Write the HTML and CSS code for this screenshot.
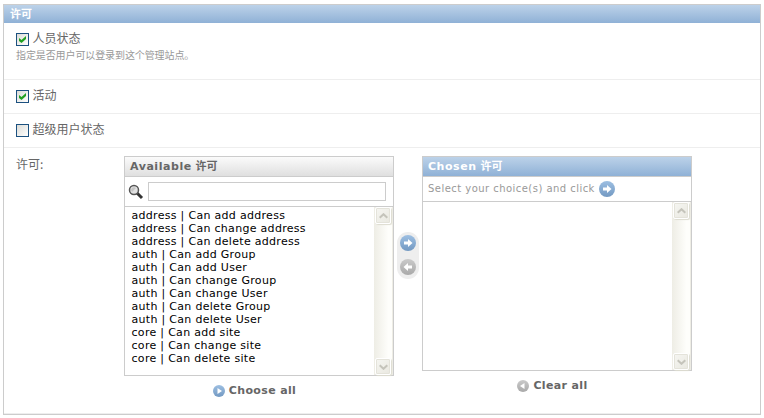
FILE: index.html
```html
<!DOCTYPE html>
<html lang="zh-CN">
<head>
<meta charset="utf-8">
<title>许可</title>
<link rel="stylesheet" href="styles.css">
</head>
<body>
<svg class="defs" width="0" height="0">
  <defs>
    <linearGradient id="blue" x1="0" y1="0" x2="0" y2="1"><stop offset="0" stop-color="#9dbfe2"/><stop offset="1" stop-color="#7399c2"/></linearGradient>
    <linearGradient id="grey" x1="0" y1="0" x2="0" y2="1"><stop offset="0" stop-color="#cacaca"/><stop offset="1" stop-color="#a9a9a9"/></linearGradient>
    <symbol id="arrow" viewBox="0 0 16 16"><path d="M4 6.500h4V4l4.500 4L8 12V9.500H4z" fill="#fff"/></symbol>
    <symbol id="chevron" viewBox="0 0 9 6"><path d="M.7 4.800 4.500 1.200 8.300 4.800" fill="none" stroke="#c5c4bb" stroke-width="2"/></symbol>
  </defs>
</svg>
<fieldset class="module">
  <h2>许可</h2>
  <div class="row row-staff">
    <label class="check"><span class="box"><svg width="7" height="7" viewBox="0 0 7 7"><path d="M0 2v3l2.500 2L7 3V0L2.500 4z" fill="#21a121"/></svg></span>人员状态</label>
    <p class="help">指定是否用户可以登录到这个管理站点。</p>
  </div>
  <div class="row"><label class="check"><span class="box"><svg width="7" height="7" viewBox="0 0 7 7"><path d="M0 2v3l2.500 2L7 3V0L2.500 4z" fill="#21a121"/></svg></span>活动</label></div>
  <div class="row"><label class="check"><span class="box"></span>超级用户状态</label></div>
  <div class="row row-perms">
    <div class="field-label">许可:</div>
    <div class="selector">
      <section class="available">
        <div class="panel">
          <h3><span>Available</span> 许可</h3>
          <div class="search">
            <svg width="16" height="16" viewBox="0 0 16 16"><path d="m9 9 5 5" stroke="#333" stroke-width="3"/><circle cx="6" cy="6" r="4.500" fill="#e2e2e2" stroke="#555" stroke-width="1.500"/><path d="M3 6a3 3 0 0 1 5-2L4 8z" fill="#c4c4c4"/></svg>
            <input type="text">
          </div>
          <div class="list">
            <ul>
              <li>address | Can add address</li>
              <li>address | Can change address</li>
              <li>address | Can delete address</li>
              <li>auth | Can add Group</li>
              <li>auth | Can add User</li>
              <li>auth | Can change Group</li>
              <li>auth | Can change User</li>
              <li>auth | Can delete Group</li>
              <li>auth | Can delete User</li>
              <li>core | Can add site</li>
              <li>core | Can change site</li>
              <li>core | Can delete site</li>
            </ul>
            <div class="scroll"><span class="btn"><svg width="9" height="6"><use href="#chevron"/></svg></span><span class="btn down"><svg width="9" height="6"><use href="#chevron"/></svg></span></div>
          </div>
        </div>
        <a class="all"><svg width="12" height="12" viewBox="0 0 12 12"><circle cx="6" cy="6" r="6" fill="url(#blue)"/><path d="M4.500 3 9 6 4.500 9z" fill="#fff"/></svg><span>Choose all</span></a>
      </section>
      <div class="chooser">
        <svg width="16" height="16" viewBox="0 0 16 16"><circle cx="8" cy="8" r="8" fill="url(#blue)"/><use href="#arrow"/></svg>
        <svg width="16" height="16" viewBox="0 0 16 16"><circle cx="8" cy="8" r="8" fill="url(#grey)"/><use href="#arrow" transform="matrix(-1 0 0 1 16 0)"/></svg>
      </div>
      <section class="chosen">
        <div class="panel">
          <h3><span>Chosen</span> 许可</h3>
          <p class="hint"><span>Select your choice(s) and click</span><svg width="16" height="16" viewBox="0 0 16 16"><circle cx="8" cy="8" r="8" fill="url(#blue)"/><use href="#arrow"/></svg></p>
          <div class="list">
            <ul></ul>
            <div class="scroll"><span class="btn"><svg width="9" height="6"><use href="#chevron"/></svg></span><span class="btn down"><svg width="9" height="6"><use href="#chevron"/></svg></span></div>
          </div>
        </div>
        <a class="all"><svg width="12" height="12" viewBox="0 0 12 12"><circle cx="6" cy="6" r="6" fill="url(#grey)"/><path d="M7.500 3 3 6l4.500 3z" fill="#fff"/></svg><span>Clear all</span></a>
      </section>
    </div>
  </div>
</fieldset>
</body>
</html>
```

FILE: styles.css
```css
* { box-sizing: border-box; margin: 0; padding: 0; }
body {
  width: 764px;
  height: 418px;
  overflow: hidden;
  background: #fff;
  color: #666;
  font: 12px/16px "DejaVu Sans", "Noto Sans CJK SC", sans-serif;
}
svg { display: block; flex: none; }
.defs { position: absolute; }
.module {
  width: 758px;
  height: 411px;
  margin: 4px 0 0 3px;
  border: 1px solid #ccc;
}
h2 {
  height: 18px;
  padding-left: 6px;
  background: linear-gradient(#bcd2e9, #8fb1d6);
  color: #fff;
  font: bold 11px/17px "Noto Sans CJK SC", sans-serif;
}
.row { height: 34px; padding: 7px 12px 0; border-bottom: 1px solid #eee; }
.row-staff { height: 57px; }
.row-perms { display: flex; height: 266px; padding-top: 8px; }
.check {
  display: flex;
  align-items: center;
  gap: 3.5px;
  font-family: "Noto Sans CJK SC", sans-serif;
}
.box {
  display: flex;
  align-items: center;
  justify-content: center;
  width: 13px;
  height: 13px;
  margin-top: 2px;
  border: 1px solid #1c5180;
  background: linear-gradient(135deg, #dcdcd7, #fff);
}
.help { margin-top: 2px; color: #999; font: 10px/14px "Noto Sans CJK SC", sans-serif; letter-spacing: -.1px; }
.field-label { width: 108px; font-family: "Noto Sans CJK SC", sans-serif; }
.selector { display: flex; }
.available, .chosen { width: 270px; }
.panel { display: flex; flex-direction: column; border: 1px solid #ccc; }
.available .panel { height: 220px; }
.chosen .panel { height: 215px; }
h3 {
  height: 20px;
  padding-left: 5px;
  border-bottom: 1px solid #ccc;
  background: linear-gradient(#fbfbfb, #dfdfdf);
  font: bold 11px/19px "DejaVu Sans", "Noto Sans CJK SC", sans-serif;
  color: #666;
}
h3 span { letter-spacing: .55px; }
.chosen h3 { background: linear-gradient(#bcd2e9, #8fb1d6); color: #fff; }
.search { display: flex; align-items: flex-start; height: 30px; padding: 5px 7px 0 3px; border-bottom: 1px solid #ccc; }
.search svg { margin-top: 2px; }
.search input { width: 238px; height: 19px; margin-left: 4px; border: 1px solid #ccc; background: #fff; }
.hint {
  display: flex;
  align-items: center;
  gap: 4px;
  height: 25px;
  padding-left: 5px;
  border-bottom: 1px solid #ccc;
  color: #999;
  font-size: 10px;
  letter-spacing: .46px;
}
.list { display: flex; flex: 1; }
.list ul { flex: 1; padding: 2px 0 0 6.5px; list-style: none; color: #000; font-size: 11px; line-height: 13px; letter-spacing: .3px; white-space: nowrap; }
.scroll {
  display: flex;
  flex-direction: column;
  justify-content: space-between;
  width: 19px;
  padding: 0 2px 0 1px;
  border-right: 1px solid #eeede5;
  background: linear-gradient(90deg, #eeede5, #fefefb 80%);
}
.btn {
  display: flex;
  align-items: center;
  justify-content: center;
  width: 16px;
  height: 17px;
  border: 1px solid #fff;
  border-radius: 2px;
  box-shadow: inset 0 0 0 1px #e4e3da, 1px 1px 1px #dddcd0;
  background: linear-gradient(135deg, #f6f6f2, #e9e8e0);
}
.down svg { transform: scaleY(-1); }
.chooser {
  display: flex;
  flex-direction: column;
  align-items: center;
  gap: 8px;
  width: 22px;
  height: 47px;
  margin: 76px 3px 0;
  padding-top: 3px;
  border-radius: 11px;
  background: #eee;
}
.all {
  display: flex;
  align-items: center;
  justify-content: center;
  gap: 4px;
  margin-top: 7px;
  padding-right: 9px;
  font-weight: bold;
  font-size: 11px;
  letter-spacing: .35px;
}
```
